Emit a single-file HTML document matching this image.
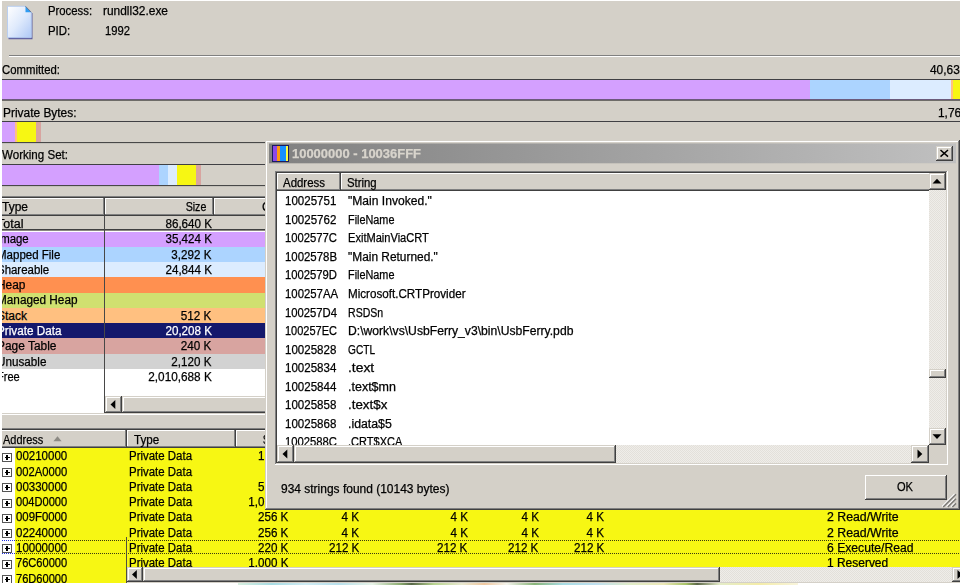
<!DOCTYPE html>
<html>
<head>
<meta charset="utf-8">
<title>VMMap</title>
<style>
html,body{margin:0;padding:0;}
body{width:962px;height:585px;overflow:hidden;background:#d4d0c8;position:relative;
 font-family:"Liberation Sans",sans-serif;font-size:12px;color:#000;}
.a{position:absolute;}
.t{position:absolute;white-space:pre;line-height:14px;height:14px;-webkit-text-stroke:0.25px currentColor;}
</style>
</head>
<body>
<svg class="a" style="left:5px;top:4px" width="32" height="38" viewBox="0 0 32 38">
<defs><linearGradient id="pg" x1="0" y1="0" x2="1" y2="1"><stop offset="0" stop-color="#ffffff"/><stop offset="0.5" stop-color="#dfeafc"/><stop offset="1" stop-color="#aec8f6"/></linearGradient>
<filter id="bl" x="-20%" y="-20%" width="140%" height="140%"><feGaussianBlur stdDeviation="0.55"/></filter></defs>
<path d="M3 3 H21 L27 9 V34.6 H3 Z" fill="#5c5c9c" filter="url(#bl)" transform="translate(0.5,0.6)"/>
<path d="M2.5 2.3 H20.5 L26.3 8.3 V33.6 H2.5 Z" fill="url(#pg)" stroke="#b4ccf2" stroke-width="0.9"/>
<path d="M20.5 2.3 L26.3 8.3 H20.5 Z" fill="#2f9cf2"/>
<path d="M20.5 2.3 L26.3 8.3" stroke="#6a7088" stroke-width="0.9" fill="none"/>
</svg>
<div class="t" style="top:4px;left:47.5px;transform-origin:0 0;transform:scaleX(0.943);">Process:</div>
<div class="t" style="top:4px;left:103.4px;transform-origin:0 0;transform:scaleX(0.994);">rundll32.exe</div>
<div class="t" style="top:24px;left:47.5px;transform-origin:0 0;transform:scaleX(0.951);">PID:</div>
<div class="t" style="top:24px;left:104.6px;transform-origin:0 0;transform:scaleX(0.936);">1992</div>
<div class="a" style="left:9px;top:55px;width:951px;height:1px;background:#808080;"></div>
<div class="a" style="left:9px;top:56px;width:951px;height:1px;background:#ffffff;"></div>
<div class="t" style="top:63px;left:2.3px;transform-origin:0 0;transform:scaleX(0.945);">Committed:</div>
<div class="t" style="top:63px;left:930.4px;transform-origin:0 0;transform:scaleX(0.991);">40,636 K</div>
<div class="a" style="left:2px;top:79px;width:958px;height:22px"><div class="a" style="left:0;top:0;width:958px;height:1px;background:#404044"></div><div class="a" style="left:0px;top:1px;width:808px;height:19px;background:#d4a0ff"></div><div class="a" style="left:808px;top:1px;width:80px;height:19px;background:#acd4ff"></div><div class="a" style="left:888px;top:1px;width:61px;height:19px;background:#dcecff"></div><div class="a" style="left:949px;top:1px;width:2px;height:19px;background:#ffc080"></div><div class="a" style="left:951px;top:1px;width:7px;height:19px;background:#f7f713"></div><div class="a" style="left:0;top:20px;width:958px;height:1px;background:#6c5a7c"></div><div class="a" style="left:0;top:21px;width:958px;height:1px;background:#6e6c68"></div></div>
<div class="t" style="top:106px;left:2.8px;transform-origin:0 0;transform:scaleX(0.993);">Private Bytes:</div>
<div class="t" style="top:106px;left:938.0px;transform-origin:0 0;transform:scaleX(0.991);">1,764 K</div>
<div class="a" style="left:2px;top:121px;width:958px;height:23px"><div class="a" style="left:0;top:0;width:958px;height:1px;background:#404044"></div><div class="a" style="left:0px;top:1px;width:13px;height:20px;background:#d4a0ff"></div><div class="a" style="left:13px;top:1px;width:2px;height:20px;background:#ffc080"></div><div class="a" style="left:15px;top:1px;width:19px;height:20px;background:#f7f713"></div><div class="a" style="left:34px;top:1px;width:5px;height:20px;background:#d8a4a0"></div><div class="a" style="left:0;top:21px;width:958px;height:1px;background:#484848"></div><div class="a" style="left:0;top:22px;width:958px;height:1px;background:#c4c1ba"></div></div>
<div class="t" style="top:148px;left:2.3px;transform-origin:0 0;transform:scaleX(0.964);">Working Set:</div>
<div class="a" style="left:2px;top:164px;width:268px;height:23px"><div class="a" style="left:0;top:0;width:268px;height:1px;background:#404044"></div><div class="a" style="left:0px;top:1px;width:157px;height:20px;background:#d4a0ff"></div><div class="a" style="left:157px;top:1px;width:9px;height:20px;background:#acd4ff"></div><div class="a" style="left:166px;top:1px;width:9px;height:20px;background:#dcecff"></div><div class="a" style="left:175px;top:1px;width:19px;height:20px;background:#f7f713"></div><div class="a" style="left:194px;top:1px;width:5px;height:20px;background:#d8a4a0"></div><div class="a" style="left:0;top:21px;width:268px;height:1px;background:#484848"></div><div class="a" style="left:0;top:22px;width:268px;height:1px;background:#c4c1ba"></div></div>
<div class="a" style="left:2px;top:196px;width:264px;height:1px;background:#808080;"></div>
<div class="a" style="left:2px;top:197px;width:264px;height:1px;background:#404040;"></div>
<div class="a" style="left:2px;top:198px;width:264px;height:18px;background:#d4d0c8;"></div>
<div class="a" style="left:2px;top:198px;width:264px;height:1px;background:#ffffff;"></div>
<div class="a" style="left:2px;top:214px;width:264px;height:1px;background:#808080;"></div>
<div class="a" style="left:2px;top:215px;width:264px;height:1px;background:#404040;"></div>
<div class="a" style="left:103px;top:198px;width:1px;height:17px;background:#808080;"></div>
<div class="a" style="left:104px;top:198px;width:1px;height:18px;background:#404040;"></div>
<div class="a" style="left:105px;top:198px;width:1px;height:16px;background:#ffffff;"></div>
<div class="a" style="left:212px;top:198px;width:1px;height:17px;background:#808080;"></div>
<div class="a" style="left:213px;top:198px;width:1px;height:18px;background:#404040;"></div>
<div class="a" style="left:214px;top:198px;width:1px;height:16px;background:#ffffff;"></div>
<div class="t" style="top:200px;left:1.8px;transform-origin:0 0;transform:scaleX(0.999);">Type</div>
<div class="t" style="top:200px;left:183.2px;transform-origin:100% 0;transform:scaleX(0.887);">Size</div>
<div class="t" style="top:200px;left:262.3px;transform-origin:0 0;transform:scaleX(1.004);">Committed</div>
<div class="a" style="left:2px;top:216px;width:264px;height:13px;background:#d4d0c8;"></div>
<div class="a" style="left:2px;top:229px;width:264px;height:1px;background:#404040;"></div>
<div class="a" style="left:2px;top:230px;width:264px;height:1px;background:#8a8780;"></div>
<div class="a" style="left:2px;top:231px;width:264px;height:183px;background:#ffffff;"></div>
<div class="t" style="top:217px;left:-3.0px;transform-origin:0 0;transform:scaleX(1.042);">Total</div>
<div class="t" style="top:217px;left:163.5px;transform-origin:100% 0;transform:scaleX(0.970);">86,640 K</div>
<div class="a" style="left:2px;top:232px;width:264px;height:15px;background:#d4a0ff;"></div>
<div class="t" style="top:232px;left:-3.0px;transform-origin:0 0;transform:scaleX(0.950);">Image</div>
<div class="t" style="top:232px;left:163.5px;transform-origin:100% 0;transform:scaleX(0.970);">35,424 K</div>
<div class="a" style="left:2px;top:247px;width:264px;height:15px;background:#acd4ff;"></div>
<div class="t" style="top:248px;left:-3.0px;transform-origin:0 0;transform:scaleX(0.959);">Mapped File</div>
<div class="t" style="top:248px;left:170.1px;transform-origin:100% 0;transform:scaleX(0.967);">3,292 K</div>
<div class="a" style="left:2px;top:262px;width:264px;height:15px;background:#dcecff;"></div>
<div class="t" style="top:263px;left:-3.0px;transform-origin:0 0;transform:scaleX(0.954);">Shareable</div>
<div class="t" style="top:263px;left:163.5px;transform-origin:100% 0;transform:scaleX(0.970);">24,844 K</div>
<div class="a" style="left:2px;top:277px;width:264px;height:16px;background:#ff9050;"></div>
<div class="t" style="top:278px;left:-3.0px;transform-origin:0 0;transform:scaleX(0.990);">Heap</div>
<div class="a" style="left:2px;top:293px;width:264px;height:15px;background:#d0e070;"></div>
<div class="t" style="top:293px;left:-3.0px;transform-origin:0 0;transform:scaleX(0.981);">Managed Heap</div>
<div class="a" style="left:2px;top:308px;width:264px;height:15px;background:#ffc080;"></div>
<div class="t" style="top:309px;left:-3.0px;transform-origin:0 0;transform:scaleX(1.000);">Stack</div>
<div class="t" style="top:309px;left:180.1px;transform-origin:100% 0;transform:scaleX(0.976);">512 K</div>
<div class="a" style="left:2px;top:323px;width:264px;height:15px;background:#14186c;"></div>
<div class="t" style="top:324px;left:-3.0px;transform-origin:0 0;transform:scaleX(0.977);color:#ffffff;">Private Data</div>
<div class="t" style="top:324px;left:163.5px;transform-origin:100% 0;transform:scaleX(0.970);color:#ffffff;">20,208 K</div>
<div class="a" style="left:2px;top:338px;width:264px;height:16px;background:#d8a4a0;"></div>
<div class="t" style="top:339px;left:-3.0px;transform-origin:0 0;transform:scaleX(0.993);">Page Table</div>
<div class="t" style="top:339px;left:180.1px;transform-origin:100% 0;transform:scaleX(0.976);">240 K</div>
<div class="a" style="left:2px;top:354px;width:264px;height:15px;background:#d2d2d2;"></div>
<div class="t" style="top:355px;left:-3.0px;transform-origin:0 0;transform:scaleX(0.974);">Unusable</div>
<div class="t" style="top:355px;left:170.1px;transform-origin:100% 0;transform:scaleX(0.967);">2,120 K</div>
<div class="a" style="left:2px;top:369px;width:264px;height:15px;background:#ffffff;"></div>
<div class="t" style="top:370px;left:-3.0px;transform-origin:0 0;transform:scaleX(0.920);">Free</div>
<div class="t" style="top:370px;left:146.8px;transform-origin:100% 0;transform:scaleX(0.980);">2,010,688 K</div>
<div class="a" style="left:104px;top:216px;width:1px;height:197px;background:#484848;"></div>
<div class="a" style="left:105px;top:396px;width:161px;height:17px;background:repeating-conic-gradient(#efede9 0 25%,#e3e0da 0 50%) 0 0/2px 2px;"></div>
<div class="a" style="left:105px;top:396px;width:17px;height:17px;background:#d4d0c8;box-shadow:inset -1px -1px 0 #404040,inset 1px 1px 0 #d4d0c8,inset -2px -2px 0 #808080,inset 2px 2px 0 #ffffff"><svg class="a" style="left:0;top:0" width="17" height="17"><polygon points="5.5,8.5 10.3,3.9000000000000004 10.3,13.1" fill="#000"/></svg></div>
<div class="a" style="left:122px;top:396px;width:150px;height:17px;background:#d4d0c8;box-shadow:inset -1px -1px 0 #404040,inset 1px 1px 0 #d4d0c8,inset -2px -2px 0 #808080,inset 2px 2px 0 #ffffff"></div>
<div class="a" style="left:2px;top:413px;width:264px;height:1px;background:#d4d0c8;"></div>
<div class="a" style="left:2px;top:414px;width:264px;height:1px;background:#ffffff;"></div>
<div class="a" style="left:2px;top:428px;width:958px;height:1px;background:#808080;"></div>
<div class="a" style="left:2px;top:429px;width:958px;height:1px;background:#404040;"></div>
<div class="a" style="left:2px;top:430px;width:958px;height:18px;background:#d4d0c8;"></div>
<div class="a" style="left:2px;top:430px;width:958px;height:1px;background:#ffffff;"></div>
<div class="a" style="left:2px;top:446px;width:958px;height:1px;background:#808080;"></div>
<div class="a" style="left:2px;top:447px;width:958px;height:1px;background:#404040;"></div>
<div class="a" style="left:125px;top:430px;width:1px;height:17px;background:#808080;"></div>
<div class="a" style="left:126px;top:430px;width:1px;height:18px;background:#404040;"></div>
<div class="a" style="left:127px;top:430px;width:1px;height:16px;background:#ffffff;"></div>
<div class="a" style="left:234px;top:430px;width:1px;height:17px;background:#808080;"></div>
<div class="a" style="left:235px;top:430px;width:1px;height:18px;background:#404040;"></div>
<div class="a" style="left:236px;top:430px;width:1px;height:16px;background:#ffffff;"></div>
<div class="t" style="top:433px;left:2.7px;transform-origin:0 0;transform:scaleX(0.915);">Address</div>
<svg class="a" style="left:53px;top:436px" width="9" height="6"><polygon points="4.5,0.3 8.6,5.2 0.4,5.2" fill="#8c8a84"/></svg>
<div class="t" style="top:433px;left:133.7px;transform-origin:0 0;transform:scaleX(0.969);">Type</div>
<div class="t" style="top:433px;left:260.2px;transform-origin:100% 0;transform:scaleX(0.887);">Size</div>
<div class="a" style="left:2px;top:448px;width:13px;height:136px;background:#ffffff;"></div>
<div class="a" style="left:15px;top:448px;width:945px;height:135px;background:#f7f713;"></div>
<div class="a" style="left:2px;top:453px;width:10px;height:9px;box-sizing:border-box;border:1px solid #555;background:#fff"><div class="a" style="left:1.5px;top:3px;width:5px;height:1.2px;background:#000"></div><div class="a" style="left:3.4px;top:1px;width:1.2px;height:5px;background:#000"></div></div>
<div class="t" style="top:449px;left:16.0px;transform-origin:0 0;transform:scaleX(0.959);">00210000</div>
<div class="t" style="top:449px;left:129.0px;transform-origin:0 0;transform:scaleX(0.954);">Private Data</div>
<div class="t" style="top:449px;left:256.8px;transform-origin:100% 0;transform:scaleX(0.969);">128 K</div>
<div class="a" style="left:2px;top:468px;width:10px;height:9px;box-sizing:border-box;border:1px solid #555;background:#fff"><div class="a" style="left:1.5px;top:3px;width:5px;height:1.2px;background:#000"></div><div class="a" style="left:3.4px;top:1px;width:1.2px;height:5px;background:#000"></div></div>
<div class="t" style="top:465px;left:16.0px;transform-origin:0 0;transform:scaleX(0.936);">002A0000</div>
<div class="t" style="top:465px;left:129.0px;transform-origin:0 0;transform:scaleX(0.954);">Private Data</div>
<div class="t" style="top:465px;left:263.5px;transform-origin:100% 0;transform:scaleX(0.984);">64 K</div>
<div class="a" style="left:2px;top:483px;width:10px;height:9px;box-sizing:border-box;border:1px solid #555;background:#fff"><div class="a" style="left:1.5px;top:3px;width:5px;height:1.2px;background:#000"></div><div class="a" style="left:3.4px;top:1px;width:1.2px;height:5px;background:#000"></div></div>
<div class="t" style="top:480px;left:16.0px;transform-origin:0 0;transform:scaleX(0.959);">00330000</div>
<div class="t" style="top:480px;left:129.0px;transform-origin:0 0;transform:scaleX(0.954);">Private Data</div>
<div class="t" style="top:480px;left:256.8px;transform-origin:100% 0;transform:scaleX(0.969);">512 K</div>
<div class="a" style="left:2px;top:499px;width:10px;height:9px;box-sizing:border-box;border:1px solid #555;background:#fff"><div class="a" style="left:1.5px;top:3px;width:5px;height:1.2px;background:#000"></div><div class="a" style="left:3.4px;top:1px;width:1.2px;height:5px;background:#000"></div></div>
<div class="t" style="top:495px;left:16.0px;transform-origin:0 0;transform:scaleX(0.924);">004D0000</div>
<div class="t" style="top:495px;left:129.0px;transform-origin:0 0;transform:scaleX(0.954);">Private Data</div>
<div class="t" style="top:495px;left:246.8px;transform-origin:100% 0;transform:scaleX(0.967);">1,024 K</div>
<div class="a" style="left:2px;top:514px;width:10px;height:9px;box-sizing:border-box;border:1px solid #555;background:#fff"><div class="a" style="left:1.5px;top:3px;width:5px;height:1.2px;background:#000"></div><div class="a" style="left:3.4px;top:1px;width:1.2px;height:5px;background:#000"></div></div>
<div class="t" style="top:510px;left:16.0px;transform-origin:0 0;transform:scaleX(0.947);">009F0000</div>
<div class="t" style="top:510px;left:129.0px;transform-origin:0 0;transform:scaleX(0.954);">Private Data</div>
<div class="t" style="top:510px;left:256.8px;transform-origin:100% 0;transform:scaleX(0.969);">256 K</div>
<div class="t" style="top:510px;left:340.9px;transform-origin:100% 0;transform:scaleX(0.972);">4 K</div>
<div class="t" style="top:510px;left:449.8px;transform-origin:100% 0;transform:scaleX(0.972);">4 K</div>
<div class="t" style="top:510px;left:520.5px;transform-origin:100% 0;transform:scaleX(0.972);">4 K</div>
<div class="t" style="top:510px;left:586.2px;transform-origin:100% 0;transform:scaleX(0.972);">4 K</div>
<div class="t" style="top:510px;left:826.7px;transform-origin:0 0;transform:scaleX(1.026);">2 Read/Write</div>
<div class="a" style="left:2px;top:529px;width:10px;height:9px;box-sizing:border-box;border:1px solid #555;background:#fff"><div class="a" style="left:1.5px;top:3px;width:5px;height:1.2px;background:#000"></div><div class="a" style="left:3.4px;top:1px;width:1.2px;height:5px;background:#000"></div></div>
<div class="t" style="top:526px;left:16.0px;transform-origin:0 0;transform:scaleX(0.959);">02240000</div>
<div class="t" style="top:526px;left:129.0px;transform-origin:0 0;transform:scaleX(0.954);">Private Data</div>
<div class="t" style="top:526px;left:256.8px;transform-origin:100% 0;transform:scaleX(0.969);">256 K</div>
<div class="t" style="top:526px;left:340.9px;transform-origin:100% 0;transform:scaleX(0.972);">4 K</div>
<div class="t" style="top:526px;left:449.8px;transform-origin:100% 0;transform:scaleX(0.972);">4 K</div>
<div class="t" style="top:526px;left:520.5px;transform-origin:100% 0;transform:scaleX(0.972);">4 K</div>
<div class="t" style="top:526px;left:586.2px;transform-origin:100% 0;transform:scaleX(0.972);">4 K</div>
<div class="t" style="top:526px;left:826.7px;transform-origin:0 0;transform:scaleX(1.026);">2 Read/Write</div>
<div class="a" style="left:2px;top:544px;width:10px;height:9px;box-sizing:border-box;border:1px solid #555;background:#fff"><div class="a" style="left:1.5px;top:3px;width:5px;height:1.2px;background:#000"></div><div class="a" style="left:3.4px;top:1px;width:1.2px;height:5px;background:#000"></div></div>
<div class="t" style="top:541px;left:16.0px;transform-origin:0 0;transform:scaleX(0.959);">10000000</div>
<div class="t" style="top:541px;left:129.0px;transform-origin:0 0;transform:scaleX(0.954);">Private Data</div>
<div class="t" style="top:541px;left:256.8px;transform-origin:100% 0;transform:scaleX(0.969);">220 K</div>
<div class="t" style="top:541px;left:327.5px;transform-origin:100% 0;transform:scaleX(0.969);">212 K</div>
<div class="t" style="top:541px;left:436.4px;transform-origin:100% 0;transform:scaleX(0.969);">212 K</div>
<div class="t" style="top:541px;left:507.1px;transform-origin:100% 0;transform:scaleX(0.969);">212 K</div>
<div class="t" style="top:541px;left:572.8px;transform-origin:100% 0;transform:scaleX(0.969);">212 K</div>
<div class="t" style="top:541px;left:826.7px;transform-origin:0 0;transform:scaleX(1.014);">6 Execute/Read</div>
<div class="a" style="left:2px;top:560px;width:10px;height:9px;box-sizing:border-box;border:1px solid #555;background:#fff"><div class="a" style="left:1.5px;top:3px;width:5px;height:1.2px;background:#000"></div><div class="a" style="left:3.4px;top:1px;width:1.2px;height:5px;background:#000"></div></div>
<div class="t" style="top:556px;left:16.0px;transform-origin:0 0;transform:scaleX(0.924);">76C60000</div>
<div class="t" style="top:556px;left:129.0px;transform-origin:0 0;transform:scaleX(0.954);">Private Data</div>
<div class="t" style="top:556px;left:246.8px;transform-origin:100% 0;transform:scaleX(0.967);">1,000 K</div>
<div class="t" style="top:556px;left:826.7px;transform-origin:0 0;transform:scaleX(0.997);">1 Reserved</div>
<div class="a" style="left:2px;top:575px;width:10px;height:9px;box-sizing:border-box;border:1px solid #555;background:#fff"><div class="a" style="left:1.5px;top:3px;width:5px;height:1.2px;background:#000"></div><div class="a" style="left:3.4px;top:1px;width:1.2px;height:5px;background:#000"></div></div>
<div class="t" style="top:572px;left:16.0px;transform-origin:0 0;transform:scaleX(0.924);">76D60000</div>
<div class="a" style="left:2px;top:540px;width:958px;height:1px;background:repeating-linear-gradient(90deg,#3a3a10 0 1px,transparent 1px 2px)"></div>
<div class="a" style="left:2px;top:553px;width:958px;height:1px;background:repeating-linear-gradient(90deg,#3a3a10 0 1px,transparent 1px 2px)"></div>
<div class="a" style="left:2px;top:540px;width:13px;height:1px;background:repeating-linear-gradient(90deg,#2030e0 0 1px,#fff 1px 2px)"></div>
<div class="a" style="left:2px;top:553px;width:13px;height:1px;background:repeating-linear-gradient(90deg,#2030e0 0 1px,#fff 1px 2px)"></div>
<div class="a" style="left:126px;top:537px;width:1px;height:46px;background:#505040;"></div>
<div class="a" style="left:127px;top:567px;width:833px;height:15px;background:repeating-conic-gradient(#efede9 0 25%,#e3e0da 0 50%) 0 0/2px 2px;"></div>
<div class="a" style="left:127px;top:567px;width:16px;height:15px;background:#d4d0c8;box-shadow:inset -1px -1px 0 #404040,inset 1px 1px 0 #d4d0c8,inset -2px -2px 0 #808080,inset 2px 2px 0 #ffffff"><svg class="a" style="left:0;top:0" width="16" height="15"><polygon points="5.0,7.5 9.8,2.9000000000000004 9.8,12.1" fill="#000"/></svg></div>
<div class="a" style="left:143px;top:567px;width:577px;height:15px;background:#d4d0c8;box-shadow:inset -1px -1px 0 #404040,inset 1px 1px 0 #d4d0c8,inset -2px -2px 0 #808080,inset 2px 2px 0 #ffffff"></div>
<div class="a" style="left:952px;top:567px;width:16px;height:15px;background:#d4d0c8;box-shadow:inset -1px -1px 0 #404040,inset 1px 1px 0 #d4d0c8,inset -2px -2px 0 #808080,inset 2px 2px 0 #ffffff"><svg class="a" style="left:0;top:0" width="16" height="15"><polygon points="10.3,7.5 5.5,2.9000000000000004 5.5,12.1" fill="#000"/></svg></div>
<div class="a" style="left:127px;top:582px;width:833px;height:1px;background:#d4d0c8;"></div>
<div class="a" style="left:0px;top:583px;width:962px;height:2px;background:#ffffff;"></div>
<div class="a" style="left:238px;top:583px;width:560px;height:2px;background:linear-gradient(90deg,#d8f0e0,#a8dce4 6%,#d0ecf4 12%,#b8e0ec 18%,#e8f4e8 24%,#8cac70 29%,#586848 31%,#b8d490 35%,#e8e8d0 40%,#f0c8a0 44%,#f4f4ec 48%,#88b478 53%,#a8dce4 58%,#c0e0f0 64%,#e0ecc8 70%,#ece8b8 76%,#a8c468 80%,#5c6848 82%,#e4ecc8 86%,#f4eca8 93%,#f8f4dc)"></div>
<div class="a" style="left:265px;top:140px;width:695px;height:370px;background:#d4d0c8;box-shadow:inset -1px -1px 0 #404040,inset 1px 1px 0 #d4d0c8,inset -2px -2px 0 #808080,inset 2px 2px 0 #ffffff"></div>
<div class="a" style="left:269px;top:143px;width:687px;height:1px;background:linear-gradient(90deg,#a4a29e,#c8c6c2);"></div>
<div class="a" style="left:269px;top:144px;width:687px;height:19px;background:linear-gradient(90deg,#808080,#c0c0c0);"></div>
<div class="a" style="left:269px;top:163px;width:687px;height:1px;background:linear-gradient(90deg,#bab7b1,#cfccc5);"></div>
<div class="a" style="left:272px;top:145px;width:17px;height:17px;background:#1a1a60"><div class="a" style="left:1px;top:1px;width:4px;height:15px;background:#8c48e8"></div><div class="a" style="left:5px;top:1px;width:3px;height:15px;background:#ff9810"></div><div class="a" style="left:8px;top:1px;width:6px;height:15px;background:#1890ff"></div><div class="a" style="left:14px;top:1px;width:2px;height:15px;background:#ffff40"></div></div>
<div class="t" style="top:147px;left:292.2px;transform-origin:0 0;transform:scaleX(1.080);color:#d8d4cc;font-weight:bold;">10000000 - 10036FFF</div>
<div class="a" style="left:936px;top:146px;width:17px;height:15px;background:#d4d0c8;box-shadow:inset -1px -1px 0 #404040,inset 1px 1px 0 #d4d0c8,inset -2px -2px 0 #808080,inset 2px 2px 0 #ffffff"></div>
<svg class="a" style="left:936px;top:146px" width="17" height="15"><path d="M4.5 4 L12 10.6 M12 4 L4.5 10.6" stroke="#000" stroke-width="1.45" fill="none"/></svg>
<div class="a" style="left:275px;top:171px;width:673px;height:294px;background:#ffffff;box-shadow:inset -1px -1px 0 #ffffff,inset 1px 1px 0 #808080,inset -2px -2px 0 #d4d0c8,inset 2px 2px 0 #404040"></div>
<div class="a" style="left:277px;top:173px;width:652px;height:18px;background:#d4d0c8;"></div>
<div class="a" style="left:277px;top:173px;width:652px;height:1px;background:#ffffff;"></div>
<div class="a" style="left:277px;top:189px;width:652px;height:1px;background:#808080;"></div>
<div class="a" style="left:277px;top:190px;width:652px;height:1px;background:#404040;"></div>
<div class="a" style="left:277px;top:173px;width:1px;height:16px;background:#ffffff;"></div>
<div class="a" style="left:339px;top:173px;width:1px;height:17px;background:#808080;"></div>
<div class="a" style="left:340px;top:173px;width:1px;height:18px;background:#404040;"></div>
<div class="a" style="left:341px;top:173px;width:1px;height:16px;background:#ffffff;"></div>
<div class="t" style="top:176px;left:283.2px;transform-origin:0 0;transform:scaleX(0.954);">Address</div>
<div class="t" style="top:176px;left:347.0px;transform-origin:0 0;transform:scaleX(0.947);">String</div>
<div class="a" style="left:277px;top:191px;width:652px;height:254px;overflow:hidden">
<div class="t" style="top:3px;left:7.6px;transform-origin:0 0;transform:scaleX(0.961);">10025751</div>
<div class="t" style="top:3px;left:70.8px;transform-origin:0 0;transform:scaleX(1.007);">&quot;Main Invoked.&quot;</div>
<div class="t" style="top:22px;left:7.6px;transform-origin:0 0;transform:scaleX(0.961);">10025762</div>
<div class="t" style="top:22px;left:70.8px;transform-origin:0 0;transform:scaleX(0.904);">FileName</div>
<div class="t" style="top:40px;left:7.6px;transform-origin:0 0;transform:scaleX(0.939);">1002577C</div>
<div class="t" style="top:40px;left:70.8px;transform-origin:0 0;transform:scaleX(0.923);">ExitMainViaCRT</div>
<div class="t" style="top:59px;left:7.6px;transform-origin:0 0;transform:scaleX(0.950);">1002578B</div>
<div class="t" style="top:59px;left:70.8px;transform-origin:0 0;transform:scaleX(0.992);">&quot;Main Returned.&quot;</div>
<div class="t" style="top:77px;left:7.6px;transform-origin:0 0;transform:scaleX(0.939);">1002579D</div>
<div class="t" style="top:77px;left:70.8px;transform-origin:0 0;transform:scaleX(0.904);">FileName</div>
<div class="t" style="top:96px;left:7.6px;transform-origin:0 0;transform:scaleX(0.946);">100257AA</div>
<div class="t" style="top:96px;left:70.8px;transform-origin:0 0;transform:scaleX(0.970);">Microsoft.CRTProvider</div>
<div class="t" style="top:115px;left:7.6px;transform-origin:0 0;transform:scaleX(0.939);">100257D4</div>
<div class="t" style="top:115px;left:70.8px;transform-origin:0 0;transform:scaleX(0.880);">RSDSn</div>
<div class="t" style="top:133px;left:7.6px;transform-origin:0 0;transform:scaleX(0.917);">100257EC</div>
<div class="t" style="top:133px;left:70.8px;transform-origin:0 0;transform:scaleX(1.013);">D:\work\vs\UsbFerry_v3\bin\UsbFerry.pdb</div>
<div class="t" style="top:152px;left:7.6px;transform-origin:0 0;transform:scaleX(0.961);">10025828</div>
<div class="t" style="top:152px;left:70.8px;transform-origin:0 0;transform:scaleX(0.844);">GCTL</div>
<div class="t" style="top:170px;left:7.6px;transform-origin:0 0;transform:scaleX(0.961);">10025834</div>
<div class="t" style="top:170px;left:70.8px;transform-origin:0 0;transform:scaleX(1.155);">.text</div>
<div class="t" style="top:189px;left:7.6px;transform-origin:0 0;transform:scaleX(0.961);">10025844</div>
<div class="t" style="top:189px;left:70.8px;transform-origin:0 0;transform:scaleX(1.041);">.text$mn</div>
<div class="t" style="top:207px;left:7.6px;transform-origin:0 0;transform:scaleX(0.961);">10025858</div>
<div class="t" style="top:207px;left:70.8px;transform-origin:0 0;transform:scaleX(1.112);">.text$x</div>
<div class="t" style="top:226px;left:7.6px;transform-origin:0 0;transform:scaleX(0.961);">10025868</div>
<div class="t" style="top:226px;left:70.8px;transform-origin:0 0;transform:scaleX(1.026);">.idata$5</div>
<div class="t" style="top:244px;left:7.6px;transform-origin:0 0;transform:scaleX(0.939);">1002588C</div>
<div class="t" style="top:244px;left:70.8px;transform-origin:0 0;transform:scaleX(0.918);">.CRT$XCA</div>
</div>
<div class="a" style="left:929px;top:173px;width:17px;height:272px;background:repeating-conic-gradient(#efede9 0 25%,#e3e0da 0 50%) 0 0/2px 2px;"></div>
<div class="a" style="left:929px;top:173px;width:17px;height:17px;background:#d4d0c8;box-shadow:inset -1px -1px 0 #404040,inset 1px 1px 0 #d4d0c8,inset -2px -2px 0 #808080,inset 2px 2px 0 #ffffff"><svg class="a" style="left:0;top:0" width="17" height="17"><polygon points="8.0,5.7 3.5,10.4 12.5,10.4" fill="#000"/></svg></div>
<div class="a" style="left:929px;top:369px;width:17px;height:9px;background:#d4d0c8;box-shadow:inset -1px -1px 0 #404040,inset 1px 1px 0 #d4d0c8,inset -2px -2px 0 #808080,inset 2px 2px 0 #ffffff"></div>
<div class="a" style="left:929px;top:428px;width:17px;height:17px;background:#d4d0c8;box-shadow:inset -1px -1px 0 #404040,inset 1px 1px 0 #d4d0c8,inset -2px -2px 0 #808080,inset 2px 2px 0 #ffffff"><svg class="a" style="left:0;top:0" width="17" height="17"><polygon points="8.0,11.1 3.5,6.3 12.5,6.3" fill="#000"/></svg></div>
<div class="a" style="left:277px;top:445px;width:652px;height:18px;background:repeating-conic-gradient(#efede9 0 25%,#e3e0da 0 50%) 0 0/2px 2px;"></div>
<div class="a" style="left:277px;top:445px;width:17px;height:18px;background:#d4d0c8;box-shadow:inset -1px -1px 0 #404040,inset 1px 1px 0 #d4d0c8,inset -2px -2px 0 #808080,inset 2px 2px 0 #ffffff"><svg class="a" style="left:0;top:0" width="17" height="18"><polygon points="5.5,9.0 10.3,4.4 10.3,13.6" fill="#000"/></svg></div>
<div class="a" style="left:294px;top:445px;width:322px;height:18px;background:#d4d0c8;box-shadow:inset -1px -1px 0 #404040,inset 1px 1px 0 #d4d0c8,inset -2px -2px 0 #808080,inset 2px 2px 0 #ffffff"></div>
<div class="a" style="left:911px;top:445px;width:18px;height:18px;background:#d4d0c8;box-shadow:inset -1px -1px 0 #404040,inset 1px 1px 0 #d4d0c8,inset -2px -2px 0 #808080,inset 2px 2px 0 #ffffff"><svg class="a" style="left:0;top:0" width="18" height="18"><polygon points="11.3,9.0 6.5,4.4 6.5,13.6" fill="#000"/></svg></div>
<div class="a" style="left:929px;top:445px;width:17px;height:18px;background:#d4d0c8;"></div>
<div class="t" style="top:482px;left:281.3px;transform-origin:0 0;transform:scaleX(0.998);">934 strings found (10143 bytes)</div>
<div class="a" style="left:865px;top:475px;width:82px;height:25px;background:#d4d0c8;box-shadow:inset -1px -1px 0 #404040,inset 1px 1px 0 #ffffff,inset -2px -2px 0 #808080,inset 2px 2px 0 #d4d0c8"></div>
<div class="t" style="top:480px;left:896.8px;transform-origin:0 0;transform:scaleX(0.923);">OK</div>
<svg class="a" style="left:942px;top:493px" width="15" height="15"><g stroke-width="1.2"><path d="M0 13.6 L12.6 1 M4.6 13.6 L12.6 5.6 M9.2 13.6 L12.6 10.2" stroke="#ffffff"/><path d="M1.2 14 L14 1.2 M5.8 14 L14 5.8 M10.4 14 L14 10.4" stroke="#7c7a76" stroke-width="1.5"/></g></svg>
<div class="a" style="left:0px;top:0px;width:2px;height:585px;background:#ffffff;"></div>
<div class="a" style="left:0px;top:0px;width:962px;height:1px;background:#ffffff;"></div>
<div class="a" style="left:960px;top:0px;width:2px;height:585px;background:#ffffff;"></div>
</body>
</html>
